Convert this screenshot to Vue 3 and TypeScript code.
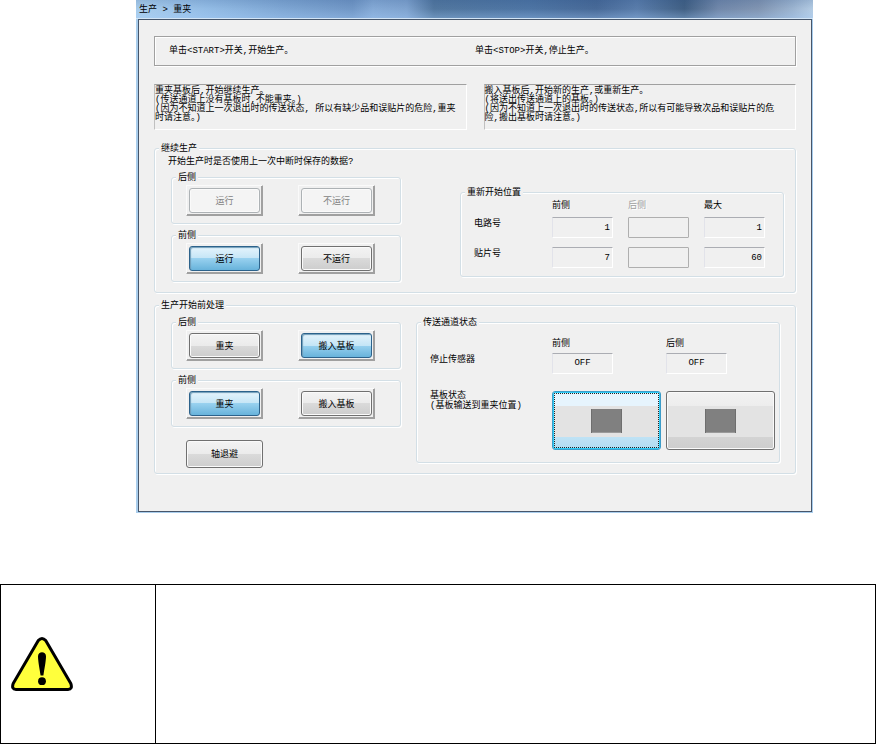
<script setup lang="ts">
import { ref } from 'vue'

interface Choice {
  id: string
  title: string
  options: string[]
  selected: number
  disabled?: boolean
}

const resume = ref<Choice[]>([
  { id: 'resume-rear', title: '后侧', options: ['运行', '不运行'], selected: -1, disabled: true },
  { id: 'resume-front', title: '前侧', options: ['运行', '不运行'], selected: 0 },
])

const prepare = ref<Choice[]>([
  { id: 'prepare-rear', title: '后侧', options: ['重夹', '搬入基板'], selected: 1 },
  { id: 'prepare-front', title: '前侧', options: ['重夹', '搬入基板'], selected: 0 },
])

const positions = [
  { id: 'circuit', label: '电路号', front: '1', max: '1' },
  { id: 'placement', label: '贴片号', front: '7', max: '60' },
]

const board = ref(0)
</script>

<template>
  <main class="page">
    <section class="window">
      <header class="titlebar"><span class="title">生产 &gt; 重夹</span></header>
      <div class="client">
        <div class="hint">
          <span>单击&lt;START&gt;开关,开始生产。</span>
          <span>单击&lt;STOP&gt;开关,停止生产。</span>
        </div>

        <div class="notes">
          <p class="note">重夹基板后,开始继续生产。<br>(传送通道上没有基板时,不能重夹。)<br>(因为不知道上一次退出时的传送状态, 所以有缺少品和误贴片的危险,重夹<br>时请注意。)</p>
          <p class="note">搬入基板后,开始新的生产,或重新生产。<br>(将送出传送通道上的基板。)<br>(因为不知道上一次退出时的传送状态,所以有可能导致次品和误贴片的危<br>险,搬出基板时请注意。)</p>
        </div>

        <fieldset class="group resume">
          <legend>继续生产</legend>
          <p class="question">开始生产时是否使用上一次中断时保存的数据?</p>
          <div class="split wide">
            <div class="choices">
              <fieldset v-for="c in resume" :key="c.id" class="group choice">
                <legend>{{ c.title }}</legend>
                <span v-for="(o, i) in c.options" :key="o" class="frame">
                  <button type="button" class="btn" :class="{ on: c.selected === i }" :disabled="c.disabled" @click="c.selected = i">{{ o }}</button>
                </span>
              </fieldset>
            </div>
            <fieldset class="group positions">
              <legend>重新开始位置</legend>
              <span></span><span>前侧</span><span class="dim">后侧</span><span>最大</span>
              <template v-for="p in positions" :key="p.id">
                <label :for="p.id">{{ p.label }}</label>
                <input :id="p.id" class="field" type="text" readonly :value="p.front">
                <input class="field" type="text" disabled :aria-label="p.label + ' 后侧'">
                <input class="field" type="text" readonly :value="p.max" :aria-label="p.label + ' 最大'">
              </template>
            </fieldset>
          </div>
        </fieldset>

        <fieldset class="group prepare">
          <legend>生产开始前处理</legend>
          <div class="split">
            <div class="choices">
              <fieldset v-for="c in prepare" :key="c.id" class="group choice">
                <legend>{{ c.title }}</legend>
                <span v-for="(o, i) in c.options" :key="o" class="frame">
                  <button type="button" class="btn" :class="{ on: c.selected === i }" @click="c.selected = i">{{ o }}</button>
                </span>
              </fieldset>
              <button type="button" class="btn retreat">轴退避</button>
            </div>
            <fieldset class="group lane">
              <legend>传送通道状态</legend>
              <span></span><span>前侧</span><span>后侧</span>
              <span>停止传感器</span>
              <output class="field state">OFF</output>
              <output class="field state">OFF</output>
              <span class="board-label">基板状态<br>(基板输送到重夹位置)</span>
              <button
                v-for="(side, i) in ['前侧', '后侧']"
                :key="side"
                type="button"
                class="board"
                :class="{ focus: board === i }"
                :aria-label="'基板状态 ' + side"
                @click="board = i"
              ><span class="plate"></span></button>
            </fieldset>
          </div>
        </fieldset>
      </div>
    </section>

    <table class="caution">
      <tbody>
        <tr>
          <td class="sign">
            <svg width="62" height="54" viewBox="0 0 62 54" role="img" aria-label="!">
              <path d="M27.3 3.6Q31 -.6 34.7 3.6L59.8 46.5Q61.8 52.4 57 52.5H5Q.2 52.4 2.2 46.5Z" fill="#ffff3c" stroke="#000" stroke-width="3" stroke-linejoin="round" />
              <path d="M27 19.3C27 13.8 35 13.8 35 19.3C35 24 33.4 32 32.4 38.5H29.6C28.6 32 27 24 27 19.3Z" />
              <circle cx="31" cy="44.2" r="3.9" />
            </svg>
          </td>
          <td></td>
        </tr>
      </tbody>
    </table>
  </main>
</template>

<style>
body {
  margin: 0;
  background: #fff;
}
</style>

<style scoped>
.page {
  font: 9px/14px "Liberation Mono", "Noto Sans CJK SC", monospace;
  color: #000;
}

.page *,
.page {
  box-sizing: border-box;
}

.page p,
fieldset {
  margin: 0;
}

.window {
  margin: 0 63px 0 136px;
  padding: 0 1px 1px 2px;
  background: #a9cdec;
}

.titlebar {
  height: 19px;
  margin: 0 -1px 0 -2px;
  padding: 3px;
  border-bottom: 1px solid #d3e5f6;
  background:
    linear-gradient(rgba(20, 60, 120, 0.14), rgba(255, 255, 255, 0) 50%, rgba(170, 210, 255, 0.3)),
    linear-gradient(90deg, #a9cdec 0, #94bde6 10%, #7ea6d3 22%, #7197c6 32%, #85aad6 35%, #7fa3cf 40%, #52779f 44%, #4e75a4 58%, #486a98 68%, #5a7dab 74%, #416084 81%, #7188aa 86%, #8195b2 92%, #9cb4d0 97%, #b4cce4 100%);
}

.client {
  padding: 16px 15px 37px;
  border: 1px solid #46566b;
  background: #f0f0f0;
}

.hint {
  display: grid;
  grid-template-columns: 306px 1fr;
  padding: 7px 14px;
  border: 1px solid #a0a0a0;
  box-shadow: 1px 1px #fff, inset 1px 1px #fff;
}

.notes {
  display: grid;
  grid-template-columns: 1fr 1fr;
  gap: 17px;
  margin: 18px 0 12px;
}

.note {
  height: 46px;
  padding-top: 2px;
  border: 1px solid;
  border-color: #a0a0a0 #fff #fff #c0c0c0;
  line-height: 9px;
  white-space: nowrap;
}

.group {
  min-width: 0;
  padding: 0;
  border: 1px solid #d3dfe6;
  border-radius: 3px;
  box-shadow: inset 1px 1px #fff, 1px 1px #fff;
}

legend {
  height: 12px;
  margin-left: 4px;
  padding: 0 2px;
  background: #f0f0f0;
}

.resume {
  padding: 1px 11px 10px 13px;
  margin-bottom: 6px;
}

.resume > legend,
.prepare > legend {
  margin-left: -9px;
}

.question {
  height: 12px;
}

.prepare {
  padding: 5px 15px 5px 13px;
}

.split {
  display: grid;
  grid-template-columns: 230px 1fr;
  gap: 15px;
  margin-left: 3px;
  align-items: start;
}

.split.wide {
  gap: 59px;
  margin-top: 4px;
}

.choices {
  display: grid;
  gap: 5px;
}

.choice {
  padding: 2px 14px 7px;
  white-space: nowrap;
  font-size: 0;
}

.choice legend,
.choice .btn {
  font-size: 9px;
}

.choice legend {
  margin-left: -10px;
}

.frame {
  display: inline-block;
  width: 77px;
  height: 31px;
  padding: 2px;
  border: 1px solid;
  border-color: #fafafa #a0a0a0 #a0a0a0 #fafafa;
  box-shadow: inset -1px -1px #a0a0a0;
  vertical-align: top;
}

.frame + .frame {
  margin-left: 35px;
}

.btn {
  width: 71px;
  height: 25px;
  padding: 2px 0 0;
  border: 1px solid #707070;
  border-radius: 3px;
  background: linear-gradient(#f3f3f3, #ebebeb 50%, #dadada 50%, #cdcdcd);
  box-shadow: inset 0 0 0 1px #fafafa;
  color: #000;
  font: inherit;
}

.btn.on {
  border-color: #2c628b;
  background: linear-gradient(#e5f4fc, #c4e5f6 50%, #98d1ef 50%, #68b3db);
  box-shadow: inset 1px 1px 1px #6f9db8;
}

.btn:disabled {
  border-color: #adb2b5;
  background: #f4f4f4;
  color: #838383;
}

.btn.retreat {
  width: 77px;
  height: 28px;
  margin: 8px 0 0 15px;
}

.positions {
  display: grid;
  grid-template-columns: 1fr 61px 61px 61px;
  grid-template-rows: 18px 30px 29px;
  column-gap: 15px;
  align-items: start;
  margin: 15px 0 0;
  padding: 1px 18px 0 13px;
}

.positions legend,
.lane legend {
  margin-left: -9px;
}

.dim {
  color: #a0a0a0;
  text-shadow: 1px 1px #fff;
}

.field {
  width: 61px;
  height: 21px;
  padding: 0 2px;
  border: 1px solid;
  border-color: #abadb3 #fff #fff #e2e3ea;
  border-radius: 1px;
  background: #f0f0f0;
  color: #000;
  font: inherit;
  text-align: right;
}

.field:disabled {
  border-color: #afafaf;
}

.state {
  line-height: 19px;
  text-align: center;
}

.lane {
  display: grid;
  grid-template-columns: 1fr 109px 109px;
  grid-template-rows: 16px 38px 59px;
  column-gap: 5px;
  align-items: start;
  padding: 9px 4px 12px 13px;
}

.board-label {
  line-height: 10px;
  white-space: nowrap;
}

.board {
  display: grid;
  place-items: center;
  height: 59px;
  padding: 0;
  border: 1px solid #707070;
  border-radius: 3px;
  background: linear-gradient(#f2f2f2 0, #ededed 14px, #e3e3e3 14px, #e3e3e3 45px, #d3d3d3 45px, #cdcdcd);
  box-shadow: inset 0 0 0 1px #fafafa;
}

.board.focus {
  border-color: #3c9cc8;
  background: linear-gradient(#e6f4fd 0, #e6f4fd 14px, #e3e3e3 14px, #e3e3e3 45px, #bfe2f5 45px, #b0dcf2);
  box-shadow: inset 0 0 0 1px #2fcdf7;
  outline: 1px dotted #222;
  outline-offset: -3px;
}

.plate {
  width: 31px;
  height: 24px;
  border: 1px solid #6e6e6e;
  border-width: 0 1px;
  background: #808080;
  box-shadow: inset 0 -1px #9a9a9a;
}

.caution {
  width: 100%;
  height: 160px;
  margin-top: 71px;
  border-collapse: collapse;
}

.caution td {
  padding: 0;
  border: 1px solid #000;
}

.caution .sign {
  width: 155px;
  padding-left: 10px;
  vertical-align: middle;
}

.sign svg {
  display: block;
}
</style>
